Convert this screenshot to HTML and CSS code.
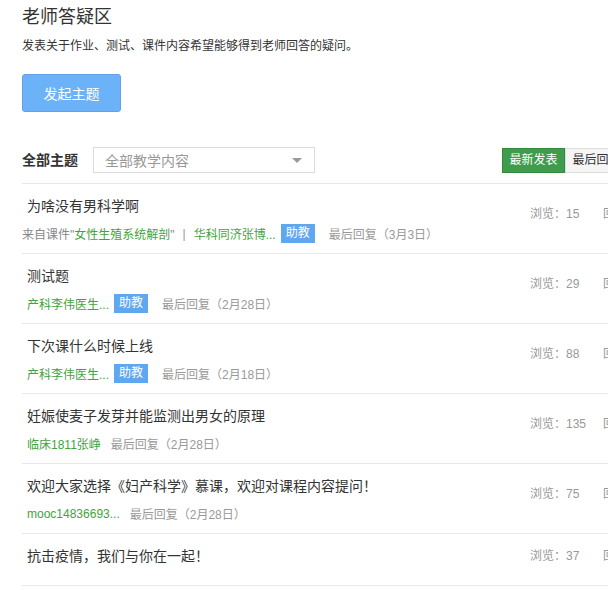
FILE: index.html
```html
<!DOCTYPE html>
<html lang="zh-CN">
<head>
<meta charset="utf-8">
<title>老师答疑区</title>
<link rel="stylesheet" href="styles.css">
</head>
<body>
<div class="board">
  <h1 class="board-title">老师答疑区</h1>
  <p class="board-desc">发表关于作业、测试、课件内容希望能够得到老师回答的疑问。</p>
  <button class="btn-post" type="button">发起主题</button>

  <div class="filter-bar">
    <span class="filter-label">全部主题</span>
    <div class="select">
      <span class="select-text">全部教学内容</span>
      <span class="select-arrow"></span>
    </div>
    <div class="sort-tabs">
      <span class="sort-tab active">最新发表</span>
      <span class="sort-tab">最后回复</span>
    </div>
  </div>

  <ul class="topic-list">
    <li class="topic">
      <div class="topic-main">
        <div class="topic-title">为啥没有男科学啊</div>
        <div class="topic-meta">
          <span class="from">来自课件"<span class="green">女性生殖系统解剖</span>"</span><span class="sep">|</span><span class="green">华科同济张博...</span><span class="tag">助教</span><span class="reply">最后回复（3月3日）</span>
        </div>
      </div>
      <div class="topic-stats"><span class="stat">浏览：15</span><span class="stat">回复：0</span></div>
    </li>
    <li class="topic">
      <div class="topic-main">
        <div class="topic-title">测试题</div>
        <div class="topic-meta"><span class="green">产科李伟医生...</span><span class="tag">助教</span><span class="reply">最后回复（2月28日）</span></div>
      </div>
      <div class="topic-stats"><span class="stat">浏览：29</span><span class="stat">回复：0</span></div>
    </li>
    <li class="topic">
      <div class="topic-main">
        <div class="topic-title">下次课什么时候上线</div>
        <div class="topic-meta"><span class="green">产科李伟医生...</span><span class="tag">助教</span><span class="reply">最后回复（2月18日）</span></div>
      </div>
      <div class="topic-stats"><span class="stat">浏览：88</span><span class="stat">回复：0</span></div>
    </li>
    <li class="topic">
      <div class="topic-main">
        <div class="topic-title">妊娠使麦子发芽并能监测出男女的原理</div>
        <div class="topic-meta"><span class="green">临床1811张峥</span><span class="reply">最后回复（2月28日）</span></div>
      </div>
      <div class="topic-stats"><span class="stat">浏览：135</span><span class="stat">回复：0</span></div>
    </li>
    <li class="topic">
      <div class="topic-main">
        <div class="topic-title">欢迎大家选择《妇产科学》慕课，欢迎对课程内容提问！</div>
        <div class="topic-meta"><span class="green">mooc14836693...</span><span class="reply">最后回复（2月28日）</span></div>
      </div>
      <div class="topic-stats"><span class="stat">浏览：75</span><span class="stat">回复：0</span></div>
    </li>
    <li class="topic topic-single">
      <div class="topic-main">
        <div class="topic-title">抗击疫情，我们与你在一起！</div>
      </div>
      <div class="topic-stats"><span class="stat">浏览：37</span><span class="stat">回复：0</span></div>
    </li>
  </ul>
</div>
</body>
</html>
```

FILE: styles.css
```css
html, body {
  margin: 0;
  padding: 0;
  overflow: hidden;
  background: #fff;
}

body {
  font-family: "Liberation Sans", "Noto Sans CJK SC", sans-serif;
  color: #333;
}

.board {
  width: 680px;
  padding: 5px 0 0 22px;
}

.board-title {
  margin: 0;
  font-size: 18px;
  line-height: 24px;
  font-weight: normal;
  color: #333;
}

.board-desc {
  margin: 8px 0 0;
  font-size: 12px;
  line-height: 18px;
  color: #333;
}

.btn-post {
  display: block;
  margin-top: 19px;
  width: 99px;
  height: 38px;
  padding: 0;
  border: 1px solid #5fa2e9;
  border-radius: 3px;
  background: #6cb2f8;
  color: #fff;
  font-family: inherit;
  font-size: 14px;
  cursor: pointer;
}

.filter-bar {
  display: flex;
  align-items: center;
  margin-top: 35px;
  padding-bottom: 10px;
  border-bottom: 1px solid #e8e8e8;
}

.filter-label {
  font-size: 14px;
  font-weight: bold;
  line-height: 26px;
  color: #333;
}

.select {
  display: flex;
  align-items: center;
  justify-content: space-between;
  box-sizing: border-box;
  width: 222px;
  height: 26px;
  margin-left: 15px;
  padding: 0 12px 0 11px;
  border: 1px solid #ddd;
  background: #fff;
}

.select-text {
  font-size: 14px;
  color: #999;
}

.select-arrow {
  width: 0;
  height: 0;
  border-left: 5px solid transparent;
  border-right: 5px solid transparent;
  border-top: 5px solid #999;
}

.sort-tabs {
  display: flex;
  margin-left: 187px;
}

.sort-tab {
  box-sizing: border-box;
  width: 63px;
  height: 25px;
  line-height: 23px;
  text-align: center;
  font-size: 12px;
  border: 1px solid #ddd;
  background: #f5f5f5;
  color: #333;
}

.sort-tab.active {
  border-color: #338a3f;
  background: #3e9c4c;
  color: #fff;
}

.topic-list {
  list-style: none;
  margin: 0;
  padding: 0;
}

.topic {
  display: flex;
  padding: 12px 0 10px 5px;
  border-bottom: 1px solid #e8e8e8;
}

.topic-single {
  padding-bottom: 19px;
}

.topic-main {
  flex: 1;
  min-width: 0;
}

.topic-title {
  font-size: 14px;
  line-height: 20px;
  color: #333;
}

.topic-meta {
  display: flex;
  align-items: center;
  margin-top: 8px;
  height: 19px;
  font-size: 12px;
  color: #999;
  white-space: nowrap;
}

.from {
  margin-left: -5px;
  color: #888;
}

.sep {
  margin: 0 8px;
  color: #999;
}

.green {
  color: #42a33c;
}

.tag {
  margin: 0 4px 0 5px;
  padding: 0 5px;
  line-height: 19px;
  background: #5fa8ef;
  color: #fff;
}

.reply {
  margin-left: 10px;
  color: #999;
}

.topic-stats {
  align-self: flex-end;
  display: flex;
  width: 172px;
  margin-bottom: 20px;
  font-size: 12px;
  line-height: 18px;
  color: #999;
  white-space: nowrap;
}

.topic-single .topic-stats {
  align-self: center;
  margin-bottom: 0;
}

.stat {
  width: 73px;
}
```
